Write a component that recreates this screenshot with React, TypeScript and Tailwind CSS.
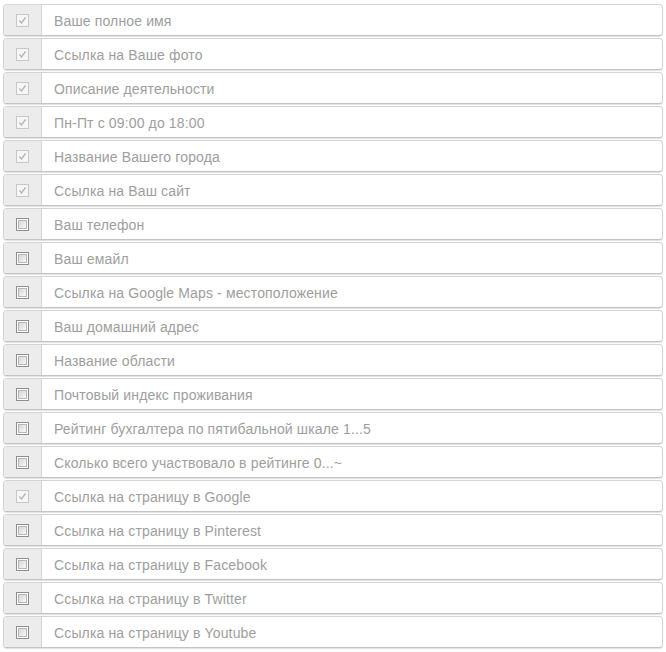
import React from 'react';

const fields = [
  { label: 'Ваше полное имя', checked: true },
  { label: 'Ссылка на Ваше фото', checked: true },
  { label: 'Описание деятельности', checked: true },
  { label: 'Пн-Пт с 09:00 до 18:00', checked: true },
  { label: 'Название Вашего города', checked: true },
  { label: 'Ссылка на Ваш сайт', checked: true },
  { label: 'Ваш телефон', checked: false },
  { label: 'Ваш емайл', checked: false },
  { label: 'Ссылка на Google Maps - местоположение', checked: false },
  { label: 'Ваш домашний адрес', checked: false },
  { label: 'Название области', checked: false },
  { label: 'Почтовый индекс проживания', checked: false },
  { label: 'Рейтинг бухгалтера по пятибальной шкале 1...5', checked: false },
  { label: 'Сколько всего участвовало в рейтинге 0...~', checked: false },
  { label: 'Ссылка на страницу в Google', checked: true },
  { label: 'Ссылка на страницу в Pinterest', checked: false },
  { label: 'Ссылка на страницу в Facebook', checked: false },
  { label: 'Ссылка на страницу в Twitter', checked: false },
  { label: 'Ссылка на страницу в Youtube', checked: false },
];

function Box({ checked }: { checked: boolean }) {
  if (checked) {
    return (
      <div className="w-[13px] h-[13px] border border-[#c8c8c8] bg-[#f6f6f6] flex items-center justify-center">
        <svg width="9" height="9" viewBox="0 0 9 9">
          <path d="M1.5 4.5 L3.5 7 L7.5 1.5" fill="none" stroke="#b4b4b4" strokeWidth="1.3" />
        </svg>
      </div>
    );
  }
  return (
    <div className="w-[13px] h-[13px] border border-[#8e8f8f] bg-white p-px">
      <div className="w-full h-full border border-[#b8b8b8] bg-gradient-to-br from-[#d6d6d6] to-[#f8f8f8]" />
    </div>
  );
}

export default function App() {
  return (
    <div className="bg-white w-[666px] h-[652px] pt-[4px] px-[3px] flex flex-col gap-[2px] font-['Liberation_Sans',Arial,sans-serif]">
      {fields.map((f, i) => (
        <div
          key={i}
          className="h-[32px] shrink-0 flex border border-[#d4d4d4] border-b-[#c4c4c4] rounded-[4px] bg-white shadow-[0_1px_1px_rgba(0,0,0,0.12)] overflow-hidden"
        >
          <div className="w-[38px] shrink-0 bg-[#ececec] border-r border-[#d6d6d6] flex items-center justify-center">
            <Box checked={f.checked} />
          </div>
          <span className="ml-[12px] pt-[2px] self-center text-[14px] tracking-[0.14px] text-[#9e9e9e]">{f.label}</span>
        </div>
      ))}
    </div>
  );
}
